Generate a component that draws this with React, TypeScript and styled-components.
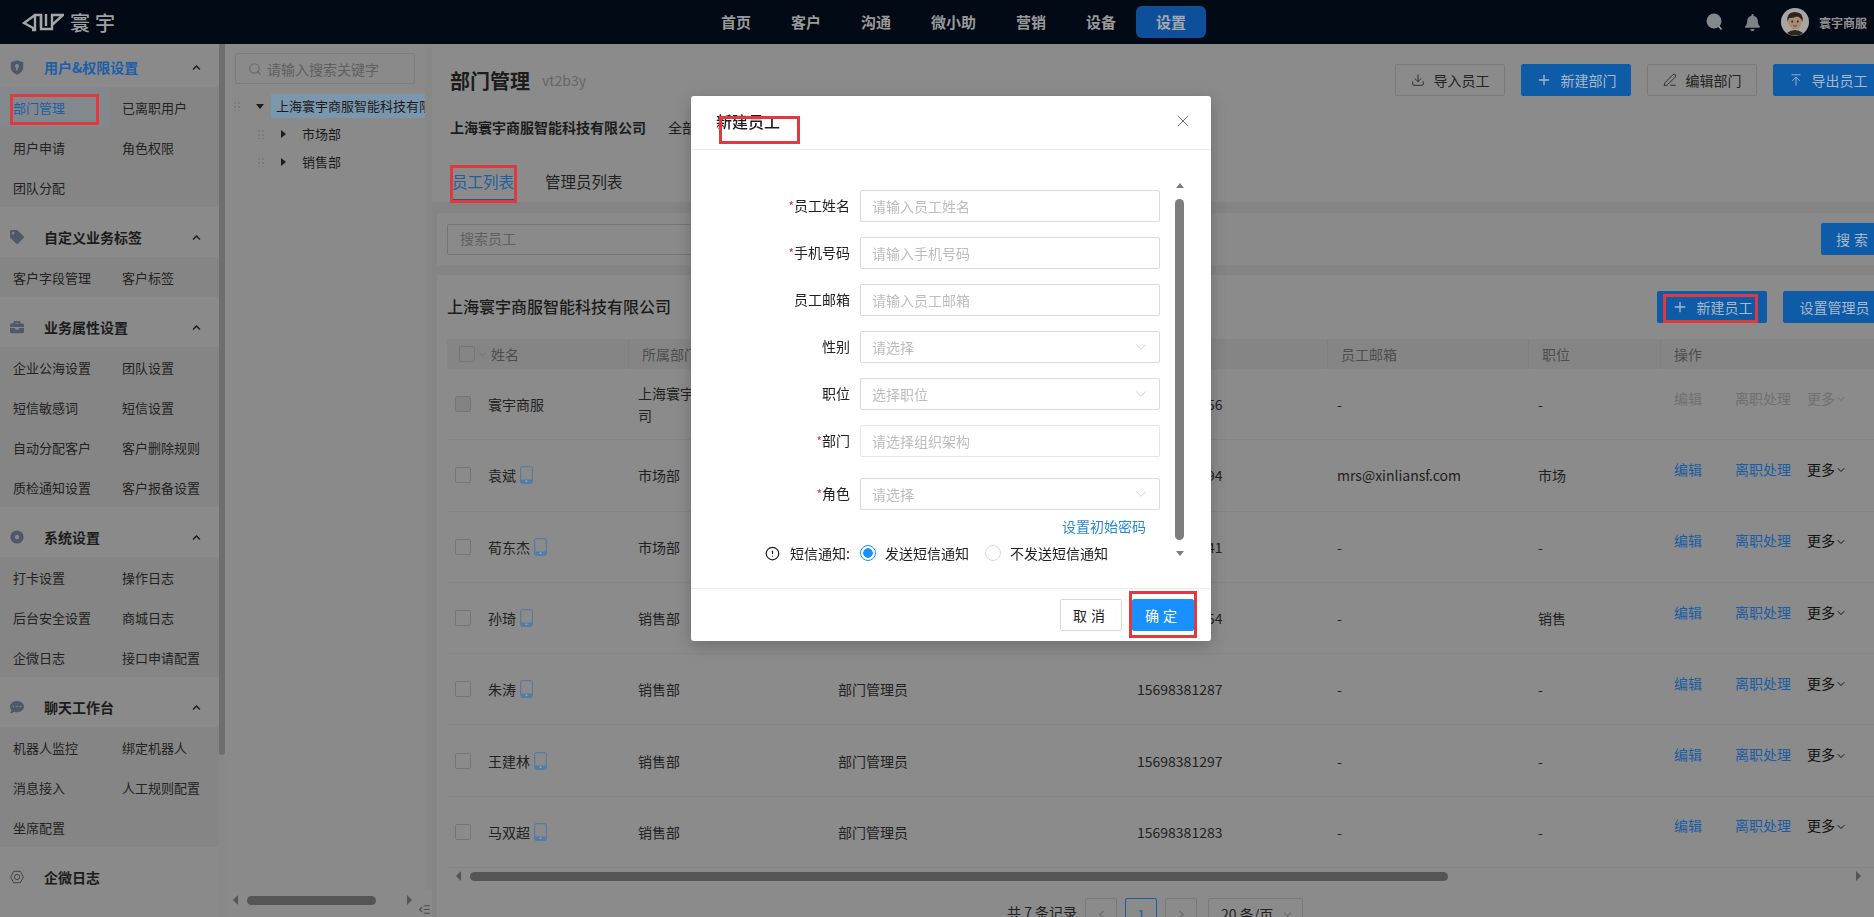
import React from 'react';
import styled, { createGlobalStyle } from 'styled-components';
import { ArrowUpToLine, ChevronDown, ChevronLeft, ChevronRight, CircleAlert, Download, IndentDecrease, PenLine, Plus, Search, X } from 'lucide-react';
import { FaBell, FaBriefcase, FaChevronUp, FaCommentDots, FaTag } from 'react-icons/fa';

const GlobalStyle = createGlobalStyle`
  * { box-sizing: border-box; }
  html, body { margin: 0; height: 100%; overflow: hidden; background: #8c8c8c; }
  body { font-family: "Noto Sans CJK SC", "Noto Sans", sans-serif; font-size: 14px; color: #1c1c1c; }
  input { font-family: inherit; }
`;

const Page = styled.div`
  height: 917px;
  display: flex;
  flex-direction: column;
  overflow: hidden;
`;

/* annotation rectangles drawn on top of the screenshot */
const RedBox = styled.span<{ $top: number; $left: number; $w: number; $h: number }>`
  position: absolute;
  top: ${({ $top }) => $top}px;
  left: ${({ $left }) => $left}px;
  width: ${({ $w }) => $w}px;
  height: ${({ $h }) => $h}px;
  border: 3px solid #df3a40;
  pointer-events: none;
`;

const TopBar = styled.header`
  flex: 0 0 44px;
  display: flex;
  align-items: center;
  background: #020a16;
  padding-left: 22px;
`;

const Brand = styled.div`
  width: 679px;
  display: flex;
  align-items: center;
  gap: 6px;
  color: #a0a0a0;
  font-size: 20px;
  font-weight: 500;
  letter-spacing: 5px;
`;

const Nav = styled.nav`
  display: flex;
  align-items: center;
`;

const NavItem = styled.a<{ $active?: boolean }>`
  height: 32px;
  line-height: 32px;
  padding: 0 20px;
  font-size: 15px;
  font-weight: 700;
  color: ${({ $active }) => ($active ? '#a3a9ad' : '#999')};
  background: ${({ $active }) => ($active ? '#0d4f99' : 'transparent')};
  border-radius: 6px;
`;

const UserArea = styled.div`
  margin-left: auto;
  display: flex;
  align-items: center;
  padding-right: 7px;
  color: #8f9296;
`;

const UserIcon = styled.span`
  display: flex;
  width: 38px;
  justify-content: center;
`;

const AvatarWrap = styled.span`
  display: flex;
  margin-left: 9px;
`;

const UserName = styled.span`
  margin-left: 10px;
  font-size: 12px;
  font-weight: 700;
  color: #909090;
`;

const Body = styled.div`
  flex: 1;
  min-height: 0;
  display: flex;
`;

const Sidebar = styled.aside`
  flex: 0 0 225px;
  display: flex;
  background: #8a8a8a;
`;

const SideList = styled.div`
  flex: 0 0 219px;
  padding-top: 3px;
`;

const VScroll = styled.div<{ $width: number }>`
  flex: 0 0 ${({ $width }) => $width}px;
  background: #888;
  display: flex;
  flex-direction: column;
`;

const VThumb = styled.div<{ $height: number }>`
  height: ${({ $height }) => $height}px;
  background: #6e6e6e;
  border-radius: 0 0 3px 3px;
`;

const SectionHead = styled.div<{ $active?: boolean }>`
  height: 40px;
  display: flex;
  align-items: center;
  padding: 0 18px 0 10px;
  font-size: 14px;
  font-weight: 700;
  color: ${({ $active }) => ($active ? '#1b5fa8' : '#1c1c1c')};
`;

const SectionIcon = styled.span`
  width: 34px;
  display: flex;
  color: #4e5868;
`;

const SectionChevron = styled.span`
  margin-left: auto;
  display: flex;
  color: #1c1c1c;
`;

const SectionItems = styled.div`
  display: grid;
  grid-template-columns: 109px 110px;
  grid-auto-rows: 40px;
  background: #858585;
  margin-bottom: 10px;
`;

const SideItem = styled.a<{ $active?: boolean }>`
  position: relative;
  display: flex;
  align-items: center;
  padding-left: 13px;
  font-size: 13px;
  white-space: nowrap;
  color: ${({ $active }) => ($active ? '#1b5fa8' : '#232323')};
  background: ${({ $active }) => ($active ? '#83888d' : 'transparent')};
`;

const TreePanel = styled.section`
  flex: 0 0 207px;
  display: flex;
  flex-direction: column;
  background: #8a8a8a;
  min-width: 0;
`;

const TreeInner = styled.div`
  flex: 1;
  min-height: 0;
  display: flex;
`;

const TreeContent = styled.div`
  flex: 0 0 200px;
  overflow: hidden;
  padding-top: 9px;
`;

const TreeSearch = styled.div`
  margin-left: 10px;
  width: 180px;
  height: 31px;
  border: 1px solid #7d7d7d;
  border-radius: 2px;
  display: flex;
  align-items: center;
  gap: 5px;
  padding-left: 12px;
  color: #5f5f5f;
  font-size: 14px;
`;

const TreeRows = styled.div`
  margin-top: 8px;
`;

const TreeRow = styled.div<{ $depth: number }>`
  height: 28px;
  display: flex;
  align-items: center;
  padding-left: ${({ $depth }) => 8 + $depth * 24}px;
  white-space: nowrap;
  font-size: 13px;
`;

const DragDots = styled.span`
  flex: 0 0 8px;
  height: 10px;
  background-image: radial-gradient(#7a7a7a 1px, transparent 1px);
  background-size: 4px 4px;
`;

const Caret = styled.span<{ $open?: boolean }>`
  margin: 0 ${({ $open }) => ($open ? 7 : 11)}px 0 ${({ $open }) => ($open ? 15 : 16)}px;
  width: 0;
  height: 0;
  ${({ $open }) =>
    $open
      ? 'border-left: 4px solid transparent; border-right: 4px solid transparent; border-top: 5px solid #1c1c1c;'
      : 'border-top: 4px solid transparent; border-bottom: 4px solid transparent; border-left: 5px solid #1c1c1c;'}
`;

const TreeLabel = styled.span<{ $selected?: boolean }>`
  height: 24px;
  line-height: 24px;
  padding: 0 5px;
  flex: none;
  background: ${({ $selected }) => ($selected ? '#7b97ad' : 'transparent')};
`;

const TreeFooter = styled.div`
  flex: 0 0 27px;
  display: flex;
  align-items: center;
  padding: 0 0 7px 8px;
  color: #555;
`;

const TreeThumb = styled.div`
  width: 129px;
  height: 9px;
  margin: 0 31px 0 9px;
  border-radius: 5px;
  background: #555;
`;

const CollapseIcon = styled.span`
  display: flex;
  align-self: flex-end;
  margin: 0 0 -6px 6px;
  color: #4a4a4a;
`;

const Arrow = styled.span<{ $dir: 'left' | 'right' }>`
  flex: none;
  width: 0;
  height: 0;
  border-top: 5px solid transparent;
  border-bottom: 5px solid transparent;
  ${({ $dir }) => ($dir === 'left' ? 'border-right: 5px solid #555;' : 'border-left: 5px solid #555;')}
`;

const Main = styled.main`
  flex: 1;
  min-width: 0;
  overflow: hidden;
  background: #848484;
`;

const MainInner = styled.div`
  width: 1460px;
`;

const TopBlock = styled.div`
  height: 158px;
  background: #8b8b8b;
  padding: 20px 9px 0 18px;
  margin-bottom: 11px;
`;

const TitleRow = styled.div`
  height: 32px;
  display: flex;
  align-items: center;
`;

const PageTitle = styled.h1`
  margin: 0;
  font-size: 20px;
  font-weight: 700;
  color: #1c1c1c;
`;

const Version = styled.span`
  margin-left: 12px;
  color: #666;
  font-size: 14px;
`;

const ButtonGroup = styled.div`
  margin-left: auto;
  display: flex;
  gap: 16px;
`;

const ActionButton = styled.button<{ $primary?: boolean; $width?: number }>`
  position: relative;
  width: ${({ $width }) => $width ?? 110}px;
  height: 32px;
  border-radius: 2px;
  border: 1px solid ${({ $primary }) => ($primary ? '#0e5ba8' : '#7a7a7a')};
  background: ${({ $primary }) => ($primary ? '#0e5ba8' : 'transparent')};
  color: ${({ $primary }) => ($primary ? '#a9b9c9' : '#222')};
  display: flex;
  align-items: center;
  justify-content: center;
  gap: 9px;
  font: inherit;
  padding: 0;
`;

const CompanyRow = styled.div`
  margin-top: 21px;
  display: flex;
  gap: 22px;
`;

const CompanyName = styled.strong`
  font-size: 14px;
  font-weight: 700;
`;

const Tabs = styled.div`
  margin: 28px 0 0 2px;
  display: flex;
  gap: 31px;
`;

const Tab = styled.a<{ $active?: boolean }>`
  position: relative;
  height: 36px;
  line-height: 32px;
  font-size: 15.5px;
  white-space: nowrap;
  color: ${({ $active }) => ($active ? '#1f5f9f' : '#222')};
  border-bottom: 2px solid ${({ $active }) => ($active ? '#1f4f95' : 'transparent')};
`;

const SearchCard = styled.div`
  height: 52px;
  margin: 0 0 10px 5px;
  padding: 0 5px 0 10px;
  background: #8a8a8a;
  display: flex;
  align-items: center;
  justify-content: space-between;
`;

const SearchBox = styled.div`
  width: 700px;
  height: 31px;
  border: 1px solid #757575;
  border-radius: 2px;
  padding-left: 12px;
  line-height: 27px;
  color: #5f5f5f;
`;

const SearchButton = styled.button`
  width: 66px;
  height: 32px;
  border: 0;
  border-radius: 2px;
  background: #0e5ba8;
  color: #a9b9c9;
  font: inherit;
  letter-spacing: 4px;
`;

const TableCard = styled.div`
  margin-left: 5px;
  padding: 16px 6px 0 10px;
  background: #8b8b8b;
  height: 642px;
`;

const CardHead = styled.div`
  display: flex;
  align-items: center;
  height: 32px;
`;

const CardTitle = styled.h2`
  margin: -2px 0 0;
  font-size: 16px;
  font-weight: 500;
  color: #1c1c1c;
`;

const TableGrid = `
  display: grid;
  grid-template-columns: 181px 200px 299px 200px 201px 132px 1fr;
`;

const TableHead = styled.div`
  ${TableGrid}
  height: 30px;
  margin-top: 16px;
  background: #858585;
  color: #4d4d4d;
`;

const HeadCell = styled.div`
  display: flex;
  align-items: center;
  padding-left: 13px;
  border-left: 1px solid #7f7f7f;
  &:first-child {
    border-left: 0;
    padding-left: 12px;
  }
`;

const HeadChevron = styled.span`
  display: flex;
  margin: 0 3px 0 2px;
  color: #6c6c6c;
`;

const Check = styled.span<{ $disabled?: boolean }>`
  flex: none;
  width: 16px;
  height: 16px;
  border: 1px solid #757575;
  border-radius: 2px;
  background: ${({ $disabled }) => ($disabled ? '#828282' : 'transparent')};
`;

const Row = styled.div`
  ${TableGrid}
  height: 71.3px;
  border-bottom: 1px solid #848484;
`;

const Cell = styled.div`
  display: flex;
  align-items: center;
  padding-left: 10px;
  line-height: 22px;
  color: #222;
`;

const NameCell = styled(Cell)`
  padding-left: 8px;
  gap: 4px;
`;

const NameText = styled.span`
  margin-left: 13px;
  white-space: nowrap;
`;

const ActionCell = styled(Cell)`
  padding: 0 0 13px 14px;
  white-space: nowrap;
`;

const RowLink = styled.a<{ $disabled?: boolean; $gap: number }>`
  margin-right: ${({ $gap }) => $gap}px;
  color: ${({ $disabled }) => ($disabled ? '#6f7072' : '#1a5ca3')};
`;

const More = styled.span<{ $disabled?: boolean }>`
  display: flex;
  align-items: center;
  color: ${({ $disabled }) => ($disabled ? '#6f7072' : '#111')};
  svg {
    margin-top: 3px;
  }
`;

const TableScroll = styled.div`
  height: 14px;
  margin-top: 1px;
  width: 1419px;
  display: flex;
  align-items: center;
  padding: 0 5px 0 9px;
  gap: 9px;
`;

const TableThumb = styled.div`
  width: 978px;
  height: 9px;
  margin-right: auto;
  border-radius: 5px;
  background: #555;
`;

const Pager = styled.div`
  margin-top: 15px;
  padding-left: 560px;
  display: flex;
  align-items: flex-start;
  color: #222;
`;

const PagerTotal = styled.span`
  line-height: 28px;
  margin-right: 8px;
  white-space: nowrap;
`;

const PagerBox = styled.span<{ $active?: boolean }>`
  width: 32px;
  height: 32px;
  margin-right: 8px;
  border: 1px solid ${({ $active }) => ($active ? '#1a5ca3' : '#7a7a7a')};
  border-radius: 2px;
  display: flex;
  align-items: center;
  justify-content: center;
  color: ${({ $active }) => ($active ? '#1a5ca3' : '#6a6a6a')};
`;

const PagerSelect = styled.span`
  width: 95px;
  height: 32px;
  margin-left: 3px;
  border: 1px solid #7a7a7a;
  border-radius: 2px;
  display: flex;
  align-items: center;
  justify-content: space-between;
  padding: 0 8px 0 12px;
  white-space: nowrap;
`;

/* dialog window floating over the dimmed page */
const Dialog = styled.div`
  position: fixed;
  left: 691px;
  top: 96px;
  width: 520px;
  height: 545px;
  background: #fff;
  border-radius: 3px;
  box-shadow: 0 4px 16px rgba(0, 0, 0, 0.22);
  display: flex;
  flex-direction: column;
`;

const DialogHead = styled.div`
  position: relative;
  flex: 0 0 54px;
  border-bottom: 1px solid #ececec;
  padding: 0 18px 4px 25px;
  display: flex;
  align-items: center;
  justify-content: space-between;
  color: #6e6e6e;
`;

const DialogTitle = styled.h3`
  margin: 0;
  font-size: 16px;
  font-weight: 500;
  color: #1c1c1c;
`;

const DialogBody = styled.div`
  position: relative;
  flex: 1;
  padding-top: 40px;
`;

const FormRow = styled.div<{ $gap?: number }>`
  display: flex;
  align-items: center;
  height: 32px;
  margin-bottom: ${({ $gap }) => $gap ?? 15}px;
`;

const FormLabel = styled.label`
  flex: 0 0 159px;
  text-align: right;
  margin-top: -2px;
  color: #222;
`;

const Required = styled.span`
  color: #e0303a;
  font-size: 12px;
`;

const TextInput = styled.input<{ $soft?: boolean }>`
  margin-left: 10px;
  width: 300px;
  height: 32px;
  border: 1px solid ${({ $soft }) => ($soft ? '#e6e6e6' : '#d9d9d9')};
  border-radius: 2px;
  padding: 0 11px;
  font-size: 14px;
  outline: none;
  &::placeholder {
    color: #bdbdbd;
  }
`;

const SelectBox = styled.div`
  margin-left: 10px;
  width: 300px;
  height: 32px;
  border: 1px solid #d9d9d9;
  border-radius: 2px;
  padding: 0 9px 0 11px;
  display: flex;
  align-items: center;
  justify-content: space-between;
  color: #bdbdbd;
`;

const PasswordLink = styled.a`
  display: block;
  margin-top: -10px;
  width: 455px;
  height: 22px;
  line-height: 22px;
  text-align: right;
  color: #2a88d8;
`;

const SmsRow = styled.div`
  margin-top: 5px;
  height: 22px;
  display: flex;
  align-items: center;
  color: #222;
`;

const SmsLabel = styled.span`
  flex: 0 0 159px;
  display: flex;
  align-items: center;
  justify-content: flex-end;
  gap: 10px;
  white-space: nowrap;
`;

const Radio = styled.span<{ $checked?: boolean; $first?: boolean }>`
  flex: none;
  width: 16px;
  height: 16px;
  margin: 0 9px 0 ${({ $first }) => ($first ? 10 : 16)}px;
  border-radius: 50%;
  border: 1px solid ${({ $checked }) => ($checked ? '#1890ff' : '#d9d9d9')};
  background: ${({ $checked }) => ($checked ? 'radial-gradient(circle, #1890ff 4.5px, #fff 5px)' : '#fff')};
`;

const DialogScroll = styled.div`
  position: absolute;
  left: 484px;
  top: 33px;
  width: 9px;
  height: 373px;
  display: flex;
  flex-direction: column;
  align-items: center;
  justify-content: space-between;
`;

const DialogThumb = styled.div`
  width: 9px;
  height: 341px;
  border-radius: 5px;
  background: #7d7d7d;
`;

const SmallArrow = styled.span<{ $down?: boolean }>`
  width: 0;
  height: 0;
  border-left: 4.5px solid transparent;
  border-right: 4.5px solid transparent;
  ${({ $down }) => ($down ? 'border-top: 5px solid #7d7d7d;' : 'border-bottom: 5px solid #7d7d7d;')}
`;

const DialogFoot = styled.div`
  flex: 0 0 53px;
  border-top: 1px solid #ececec;
  padding: 10px 17px 0 0;
  display: flex;
  justify-content: flex-end;
  gap: 10px;
`;

const FootButton = styled.button<{ $primary?: boolean }>`
  position: relative;
  width: 62px;
  height: 32px;
  border-radius: 2px;
  border: 1px solid ${({ $primary }) => ($primary ? '#1890ff' : '#d9d9d9')};
  background: ${({ $primary }) => ($primary ? '#1890ff' : '#fff')};
  color: ${({ $primary }) => ($primary ? '#fff' : '#222')};
  font: inherit;
  letter-spacing: 4px;
  padding: 0;
`;

const Logo = () => (
  <svg width="42" height="20" viewBox="0 0 42 20" fill="none" stroke="#a6a6a6" strokeWidth="2.4">
    <path d="M13 3 L2 11 L13 17" />
    <path d="M10 18 H13 V3 H19 V15" />
    <path d="M19 3 V17 H30 V3 H41 L30 13" />
    <path d="M24 2 V14" />
  </svg>
);

const ShieldIcon = () => (
  <svg width="14" height="15" viewBox="0 0 14 15">
    <path d="M7 0.3 L13.2 2.3 V7.5 C13.2 11 10.4 13.4 7 14.7 C3.6 13.4 0.8 11 0.8 7.5 V2.3 Z" fill="#4e5868" />
    <circle cx="7" cy="6" r="2" fill="#8a8a8a" />
    <rect x="6.2" y="7" width="1.6" height="3.4" fill="#8a8a8a" />
  </svg>
);

const HexIcon = () => (
  <svg width="14" height="14" viewBox="0 0 16 16" fill="none" stroke="#3c3c3c" strokeWidth="1">
    <path d="M4.2 1.5 H11.8 L15.3 8 L11.8 14.5 H4.2 L0.7 8 Z" />
    <circle cx="8" cy="8" r="3" />
  </svg>
);

const GearIcon = () => (
  <svg width="14" height="14" viewBox="0 0 14 14">
    <circle cx="7" cy="7" r="6.6" fill="#4e5868" />
    <circle cx="7" cy="7" r="2.2" fill="#8a8a8a" />
  </svg>
);

const PhoneIcon = () => (
  <svg width="13" height="18" viewBox="0 0 13 18" fill="none">
    <rect x="0.7" y="0.7" width="11.6" height="16.6" rx="1.5" stroke="#51779f" />
    <path d="M1 13.5 H12 V16 a1 1 0 0 1 -1 1 H2 a1 1 0 0 1 -1 -1 Z" fill="#4f7eae" />
    <circle cx="6.5" cy="15.2" r="0.9" fill="#9ab" />
  </svg>
);

const Avatar = () => (
  <svg width="28" height="28" viewBox="0 0 28 28">
    <circle cx="14" cy="14" r="14" fill="#a8a6a3" />
    <path d="M6 25 Q14 19 22 25 L18 27.5 H10 Z" fill="#2b2622" />
    <ellipse cx="14" cy="13" rx="7" ry="8.5" fill="#a98c70" />
    <path d="M6.5 14 Q5 4 14 4 Q23 4 21.5 14 Q20 9 16 8.5 Q11 10 8 10 Q7 12 6.5 14 Z" fill="#2c2420" />
    <circle cx="11.2" cy="13.5" r="0.9" fill="#221c18" />
    <circle cx="16.8" cy="13.5" r="0.9" fill="#221c18" />
    <path d="M12 17.5 Q14 18.8 16 17.5" stroke="#6b4436" fill="none" />
  </svg>
);

const HeaderSearch = () => (
  <svg width="17" height="18" viewBox="0 0 17 18">
    <circle cx="8" cy="8" r="7.5" fill="#83888b" />
    <path d="M12.5 13 L15.5 16.5" stroke="#a0a5a8" strokeWidth="1.6" />
  </svg>
);

type Section = { title: string; icon: React.ReactNode; items: string[]; active?: boolean };

const sections: Section[] = [
  { title: '用户&权限设置', icon: <ShieldIcon />, active: true, items: ['部门管理', '已离职用户', '用户申请', '角色权限', '团队分配'] },
  { title: '自定义业务标签', icon: <FaTag size={14} />, items: ['客户字段管理', '客户标签'] },
  { title: '业务属性设置', icon: <FaBriefcase size={14} />, items: ['企业公海设置', '团队设置', '短信敏感词', '短信设置', '自动分配客户', '客户删除规则', '质检通知设置', '客户报备设置'] },
  { title: '系统设置', icon: <GearIcon />, items: ['打卡设置', '操作日志', '后台安全设置', '商城日志', '企微日志', '接口申请配置'] },
  { title: '聊天工作台', icon: <FaCommentDots size={14} />, items: ['机器人监控', '绑定机器人', '消息接入', '人工规则配置', '坐席配置'] },
];

type Employee = { name: string; dept: string; role: string; phone: string; email: string; post: string; mobile?: boolean; locked?: boolean };

const employees: Employee[] = [
  { name: '寰宇商服', dept: '上海寰宇商服智能科技有限公司', role: '超级管理员', phone: '15698381256', email: '-', post: '-', locked: true },
  { name: '袁斌', dept: '市场部', role: '部门管理员', phone: '15698381294', email: 'mrs@xinliansf.com', post: '市场', mobile: true },
  { name: '荀东杰', dept: '市场部', role: '部门管理员', phone: '15698381241', email: '-', post: '-', mobile: true },
  { name: '孙琦', dept: '销售部', role: '部门管理员', phone: '15698381254', email: '-', post: '销售', mobile: true },
  { name: '朱涛', dept: '销售部', role: '部门管理员', phone: '15698381287', email: '-', post: '-', mobile: true },
  { name: '王建林', dept: '销售部', role: '部门管理员', phone: '15698381297', email: '-', post: '-', mobile: true },
  { name: '马双超', dept: '销售部', role: '部门管理员', phone: '15698381283', email: '-', post: '-', mobile: true },
];

const navItems = ['首页', '客户', '沟通', '微小助', '营销', '设备'];

export default function App() {
  return (
    <Page>
      <GlobalStyle />
      <TopBar>
        <Brand>
          <Logo />
          <span>寰宇</span>
        </Brand>
        <Nav>
          {navItems.map((item) => (
            <NavItem key={item}>{item}</NavItem>
          ))}
          <NavItem $active>设置</NavItem>
        </Nav>
        <UserArea>
          <UserIcon><HeaderSearch /></UserIcon>
          <UserIcon><FaBell size={17} color="#7d8286" /></UserIcon>
          <AvatarWrap><Avatar /></AvatarWrap>
          <UserName>寰宇商服</UserName>
        </UserArea>
      </TopBar>

      <Body>
        <Sidebar>
          <SideList>
            {sections.map((section) => (
              <div key={section.title}>
                <SectionHead $active={section.active}>
                  <SectionIcon>{section.icon}</SectionIcon>
                  {section.title}
                  <SectionChevron><FaChevronUp size={9} /></SectionChevron>
                </SectionHead>
                <SectionItems>
                  {section.items.map((item) => (
                    <SideItem key={item} $active={item === '部门管理'}>
                      {item}
                      {item === '部门管理' && <RedBox $top={7} $left={10} $w={89} $h={31} />}
                    </SideItem>
                  ))}
                </SectionItems>
              </div>
            ))}
            <SectionHead>
              <SectionIcon><HexIcon /></SectionIcon>
              企微日志
            </SectionHead>
          </SideList>
          <VScroll $width={6}>
            <VThumb $height={711} />
          </VScroll>
        </Sidebar>

        <TreePanel>
          <TreeInner>
            <TreeContent>
              <TreeSearch>
                <Search size={14} color="#6a6a6a" />
                请输入搜索关键字
              </TreeSearch>
              <TreeRows>
                <TreeRow $depth={0}>
                  <DragDots />
                  <Caret $open />
                  <TreeLabel $selected>上海寰宇商服智能科技有限公司</TreeLabel>
                </TreeRow>
                <TreeRow $depth={1}>
                  <DragDots />
                  <Caret />
                  <TreeLabel>市场部</TreeLabel>
                </TreeRow>
                <TreeRow $depth={1}>
                  <DragDots />
                  <Caret />
                  <TreeLabel>销售部</TreeLabel>
                </TreeRow>
              </TreeRows>
            </TreeContent>
            <VScroll $width={7} />
          </TreeInner>
          <TreeFooter>
            <Arrow $dir="left" />
            <TreeThumb />
            <Arrow $dir="right" />
            <CollapseIcon><IndentDecrease size={13} /></CollapseIcon>
          </TreeFooter>
        </TreePanel>

        <Main>
          <MainInner>
            <TopBlock>
              <TitleRow>
                <PageTitle>部门管理</PageTitle>
                <Version>vt2b3y</Version>
                <ButtonGroup>
                  <ActionButton><Download size={14} strokeWidth={1.5} />导入员工</ActionButton>
                  <ActionButton $primary><Plus size={16} />新建部门</ActionButton>
                  <ActionButton><PenLine size={14} strokeWidth={1.5} />编辑部门</ActionButton>
                  <ActionButton $primary><ArrowUpToLine size={14} strokeWidth={1.5} />导出员工</ActionButton>
                </ButtonGroup>
              </TitleRow>
              <CompanyRow>
                <CompanyName>上海寰宇商服智能科技有限公司</CompanyName>
                <span>全部员工</span>
              </CompanyRow>
              <Tabs>
                <Tab $active>
                  员工列表
                  <RedBox $top={0} $left={-2} $w={67} $h={38} />
                </Tab>
                <Tab>管理员列表</Tab>
              </Tabs>
            </TopBlock>

            <SearchCard>
              <SearchBox>搜索员工</SearchBox>
              <SearchButton>搜索</SearchButton>
            </SearchCard>

            <TableCard>
              <CardHead>
                <CardTitle>上海寰宇商服智能科技有限公司</CardTitle>
                <ButtonGroup>
                  <ActionButton $primary>
                    <Plus size={16} />新建员工
                    <RedBox $top={2} $left={5} $w={95} $h={29} />
                  </ActionButton>
                  <ActionButton $primary $width={103}>设置管理员</ActionButton>
                </ButtonGroup>
              </CardHead>

              <TableHead>
                <HeadCell>
                  <Check />
                  <HeadChevron><ChevronDown size={11} /></HeadChevron>
                  姓名
                </HeadCell>
                <HeadCell>所属部门</HeadCell>
                <HeadCell>角色</HeadCell>
                <HeadCell>手机号码</HeadCell>
                <HeadCell>员工邮箱</HeadCell>
                <HeadCell>职位</HeadCell>
                <HeadCell>操作</HeadCell>
              </TableHead>

              {employees.map((emp) => (
                <Row key={emp.phone}>
                  <NameCell>
                    <Check $disabled={emp.locked} />
                    <NameText>{emp.name}</NameText>
                    {emp.mobile && <PhoneIcon />}
                  </NameCell>
                  <Cell>{emp.dept}</Cell>
                  <Cell>{emp.role}</Cell>
                  <Cell>{emp.phone}</Cell>
                  <Cell>{emp.email}</Cell>
                  <Cell>{emp.post}</Cell>
                  <ActionCell>
                    <RowLink $disabled={emp.locked} $gap={33}>编辑</RowLink>
                    <RowLink $disabled={emp.locked} $gap={16}>离职处理</RowLink>
                    <More $disabled={emp.locked}>更多<ChevronDown size={12} /></More>
                  </ActionCell>
                </Row>
              ))}

              <TableScroll>
                <Arrow $dir="left" />
                <TableThumb />
                <Arrow $dir="right" />
              </TableScroll>

              <Pager>
                <PagerTotal>共 7 条记录</PagerTotal>
                <PagerBox><ChevronLeft size={13} /></PagerBox>
                <PagerBox $active>1</PagerBox>
                <PagerBox><ChevronRight size={13} /></PagerBox>
                <PagerSelect>20 条/页<ChevronDown size={13} color="#6a6a6a" /></PagerSelect>
              </Pager>
            </TableCard>
          </MainInner>
        </Main>
      </Body>

      <Dialog>
        <DialogHead>
          <DialogTitle>新建员工</DialogTitle>
          <X size={20} strokeWidth={1.2} />
          <RedBox $top={20} $left={28} $w={81} $h={28} />
        </DialogHead>
        <DialogBody>
          <FormRow>
            <FormLabel><Required>*</Required>员工姓名</FormLabel>
            <TextInput placeholder="请输入员工姓名" />
          </FormRow>
          <FormRow>
            <FormLabel><Required>*</Required>手机号码</FormLabel>
            <TextInput placeholder="请输入手机号码" />
          </FormRow>
          <FormRow>
            <FormLabel>员工邮箱</FormLabel>
            <TextInput placeholder="请输入员工邮箱" />
          </FormRow>
          <FormRow>
            <FormLabel>性别</FormLabel>
            <SelectBox>请选择<ChevronDown size={18} strokeWidth={1} /></SelectBox>
          </FormRow>
          <FormRow>
            <FormLabel>职位</FormLabel>
            <SelectBox>选择职位<ChevronDown size={18} strokeWidth={1} /></SelectBox>
          </FormRow>
          <FormRow $gap={21}>
            <FormLabel><Required>*</Required>部门</FormLabel>
            <TextInput $soft placeholder="请选择组织架构" />
          </FormRow>
          <FormRow>
            <FormLabel><Required>*</Required>角色</FormLabel>
            <SelectBox>请选择<ChevronDown size={18} strokeWidth={1} /></SelectBox>
          </FormRow>
          <PasswordLink>设置初始密码</PasswordLink>
          <SmsRow>
            <SmsLabel><CircleAlert size={15} />短信通知:</SmsLabel>
            <Radio $checked $first />
            发送短信通知
            <Radio />
            不发送短信通知
          </SmsRow>
          <DialogScroll>
            <SmallArrow />
            <DialogThumb />
            <SmallArrow $down />
          </DialogScroll>
        </DialogBody>
        <DialogFoot>
          <FootButton>取消</FootButton>
          <FootButton $primary>
            确定
            <RedBox $top={-9} $left={-4} $w={68} $h={47} />
          </FootButton>
        </DialogFoot>
      </Dialog>
    </Page>
  );
}
